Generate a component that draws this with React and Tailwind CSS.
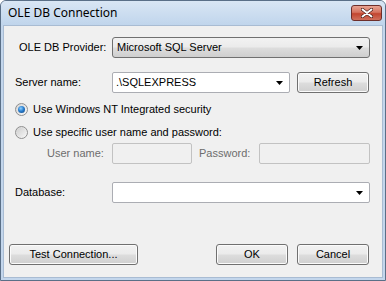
import React from "react";

const btn =
    "h-[21px] rounded-[3px] border border-[#707070] bg-[linear-gradient(#f2f2f2_0%,#ebebeb_48%,#dddddd_52%,#cfcfcf_100%)] shadow-[inset_0_0_0_1px_#fbfbfb] text-[11px] text-black flex items-center justify-center";

const Arrow = () => (
    <svg width="7" height="4" viewBox="0 0 7 4" className="shrink-0">
        <path d="M0 0h7L3.5 4z" fill="#000" />
    </svg>
);

const Radio = ({ checked }) => (
    <span className="w-[13px] h-[13px] rounded-full border border-[#8f8f8f] bg-[linear-gradient(135deg,#d5d5d5,#f8f8f8)] flex items-center justify-center shrink-0">
        {checked ? (
            <span className="w-[7px] h-[7px] rounded-full bg-[radial-gradient(circle_at_40%_35%,#8fd1ff_0%,#2a7fd0_45%,#0d3f7a_100%)]" />
        ) : (
            <span className="w-[9px] h-[9px] rounded-full bg-[linear-gradient(135deg,#cfcfcf,#f4f4f4)]" />
        )}
    </span>
);

export default function App() {
    return (
        <div className="w-[386px] h-[281px] flex flex-col border border-[#5a6f87] rounded-t-[6px] bg-[#c3d6ec] overflow-hidden font-['Liberation_Sans',Arial,sans-serif]">
            {/* Title bar */}
            <div className="h-[24px] flex items-center pl-[7px] pr-[3px] bg-[linear-gradient(#d9e6f4,#c0d5ec)]">
                <span className="flex-1 text-[12px] text-black font-['Noto_Sans',sans-serif]">OLE DB Connection</span>
                <div className="w-[31px] h-[16px] rounded-[3px] border border-[#6d2e2a] bg-[linear-gradient(#e8a493_0%,#d5735f_45%,#c2452f_55%,#d0705c_100%)] flex items-center justify-center">
                    <svg width="12" height="10" viewBox="0 0 12 10">
                        <path d="M1.5 1.5l9 7M10.5 1.5l-9 7" stroke="#4a1f1a" strokeWidth="3.4" strokeLinecap="round" />
                        <path d="M1.5 1.5l9 7M10.5 1.5l-9 7" stroke="#fff" strokeWidth="2" strokeLinecap="round" />
                    </svg>
                </div>
            </div>

            {/* Body */}
            <div className="flex-1 mx-[2px] mb-[2px] bg-[#f0f0f0] border border-[#a9bcd3] flex flex-col text-[11px] text-black">
                <div className="flex items-center mt-[11px]">
                    <span className="ml-[15px] w-[93px]">OLE DB Provider:</span>
                    <div className="w-[258px] h-[21px] rounded-[3px] border border-[#707070] bg-[linear-gradient(#f2f2f2_0%,#ebebeb_48%,#dddddd_52%,#cfcfcf_100%)] flex items-center pl-[4px] pr-[6px]">
                        <span className="flex-1">Microsoft SQL Server</span>
                        <Arrow />
                    </div>
                </div>

                <div className="flex items-center mt-[14px]">
                    <span className="ml-[11px] w-[97px]">Server name:</span>
                    <div className="w-[178px] h-[21px] border border-[#abadb3] rounded-[2px] bg-white flex items-center pl-[3px] pr-[6px]">
                        <span className="flex-1">.\SQLEXPRESS</span>
                        <Arrow />
                    </div>
                    <button className={`${btn} ml-[7px] w-[72px]`}>Refresh</button>
                </div>

                <label className="flex items-center gap-[5px] ml-[11px] mt-[10px] h-[13px]">
                    <Radio checked />
                    <span>Use Windows NT Integrated security</span>
                </label>
                <label className="flex items-center gap-[5px] ml-[11px] mt-[10px] h-[13px]">
                    <Radio />
                    <span>Use specific user name and password:</span>
                </label>

                <div className="flex items-center mt-[4px] text-[#6d6d6d]">
                    <span className="ml-[43px] w-[65px]">User name:</span>
                    <div className="w-[80px] h-[21px] border border-[#c2c2c2] rounded-[2px] bg-[#f0f0f0]" />
                    <span className="ml-[7px] w-[60px]">Password:</span>
                    <div className="w-[111px] h-[21px] border border-[#c2c2c2] rounded-[2px] bg-[#f0f0f0]" />
                </div>

                <div className="flex items-center mt-[18px]">
                    <span className="ml-[11px] w-[97px]">Database:</span>
                    <div className="w-[258px] h-[21px] border border-[#abadb3] rounded-[2px] bg-white flex items-center justify-end pr-[6px]">
                        <Arrow />
                    </div>
                </div>

                <div className="flex items-center mt-auto mb-[12px]">
                    <button className={`${btn} ml-[5px] w-[129px] border-[#3c7fb1] shadow-[inset_0_0_0_1px_#48d2fb]`}>
                        Test Connection...
                    </button>
                    <button className={`${btn} ml-[78px] w-[72px]`}>OK</button>
                    <button className={`${btn} ml-[9px] w-[72px]`}>Cancel</button>
                </div>
            </div>
        </div>
    );
}
